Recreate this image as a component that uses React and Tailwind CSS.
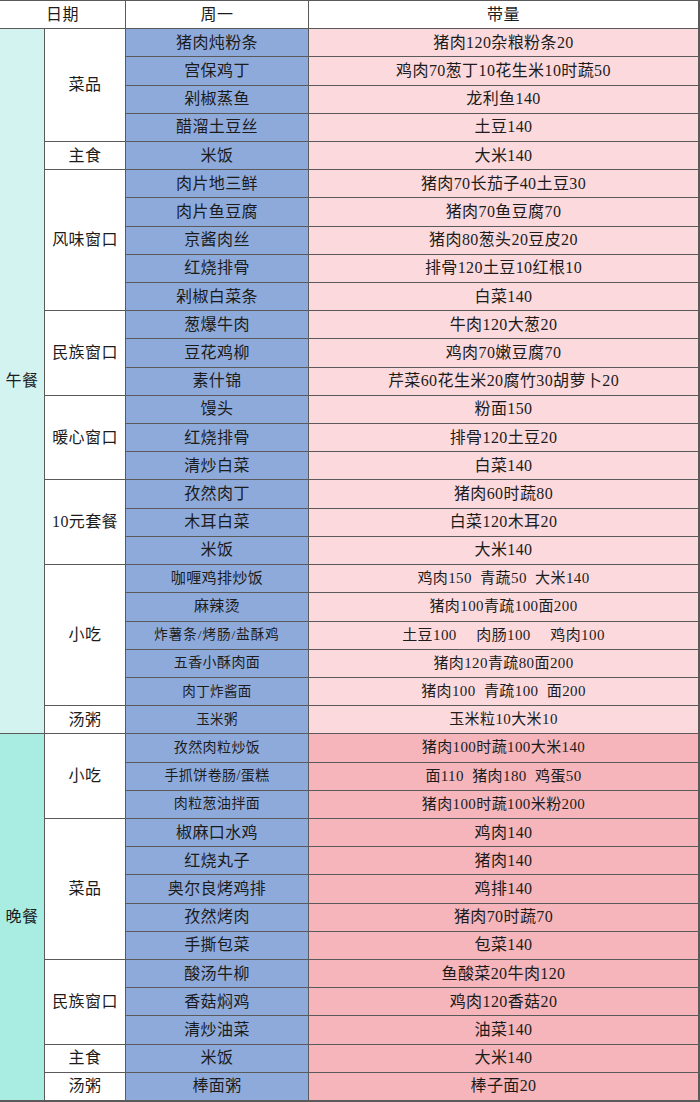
import React from "react";

const lunch = [
  { g: "菜品", items: [
    ["猪肉炖粉条", "猪肉120杂粮粉条20"],
    ["宫保鸡丁", "鸡肉70葱丁10花生米10时蔬50"],
    ["剁椒蒸鱼", "龙利鱼140"],
    ["醋溜土豆丝", "土豆140"],
  ]},
  { g: "主食", items: [["米饭", "大米140"]] },
  { g: "风味窗口", items: [
    ["肉片地三鲜", "猪肉70长茄子40土豆30"],
    ["肉片鱼豆腐", "猪肉70鱼豆腐70"],
    ["京酱肉丝", "猪肉80葱头20豆皮20"],
    ["红烧排骨", "排骨120土豆10红根10"],
    ["剁椒白菜条", "白菜140"],
  ]},
  { g: "民族窗口", items: [
    ["葱爆牛肉", "牛肉120大葱20"],
    ["豆花鸡柳", "鸡肉70嫩豆腐70"],
    ["素什锦", "芹菜60花生米20腐竹30胡萝卜20"],
  ]},
  { g: "暖心窗口", items: [
    ["馒头", "粉面150"],
    ["红烧排骨", "排骨120土豆20"],
    ["清炒白菜", "白菜140"],
  ]},
  { g: "10元套餐", items: [
    ["孜然肉丁", "猪肉60时蔬80"],
    ["木耳白菜", "白菜120木耳20"],
    ["米饭", "大米140"],
  ]},
  { g: "小吃", items: [
    ["咖喱鸡排炒饭", "鸡肉150  青蔬50  大米140", "text-[15px]", "text-[15px]"],
    ["麻辣烫", "猪肉100青疏100面200", "text-[15px]", "text-[15px]"],
    ["炸薯条/烤肠/盐酥鸡", "土豆100　 肉肠100　 鸡肉100", "text-[13.5px] tracking-[1px]", "text-[15px]"],
    ["五香小酥肉面", "猪肉120青疏80面200", "text-[14px]", "text-[15px]"],
    ["肉丁炸酱面", "猪肉100  青疏100  面200", "text-[13.5px]", "text-[15px]"],
  ]},
  { g: "汤粥", items: [["玉米粥", "玉米粒10大米10", "text-[13.5px]", "text-[15px]"]] },
];

const dinner = [
  { g: "小吃", items: [
    ["孜然肉粒炒饭", "猪肉100时蔬100大米140", "text-[14px]", "text-[15px]"],
    ["手抓饼卷肠/蛋糕", "面110  猪肉180  鸡蛋50", "text-[14px]", "text-[15px]"],
    ["肉粒葱油拌面", "猪肉100时蔬100米粉200", "text-[14px]", "text-[15px]"],
  ]},
  { g: "菜品", items: [
    ["椒麻口水鸡", "鸡肉140"],
    ["红烧丸子", "猪肉140"],
    ["奥尔良烤鸡排", "鸡排140"],
    ["孜然烤肉", "猪肉70时蔬70"],
    ["手撕包菜", "包菜140"],
  ]},
  { g: "民族窗口", items: [
    ["酸汤牛柳", "鱼酸菜20牛肉120"],
    ["香菇焖鸡", "鸡肉120香菇20"],
    ["清炒油菜", "油菜140"],
  ]},
  { g: "主食", items: [["米饭", "大米140"]] },
  { g: "汤粥", items: [["棒面粥", "棒子面20"]] },
];

const span = {
  1: "row-span-1",
  3: "row-span-3",
  4: "row-span-4",
  5: "row-span-5",
};

const cell = "flex items-center justify-center whitespace-pre";

function Meal({ name, groups, mealBg, pinkBg, total }) {
  const out = [];
  groups.forEach((grp, gi) => {
    grp.items.forEach((it, ii) => {
      if (gi === 0 && ii === 0) {
        out.push(
          <div key={name} className={`${cell} ${mealBg} ${total === 25 ? "row-span-[25]" : "row-span-[13]"}`}>
            {name}
          </div>
        );
      }
      if (ii === 0) {
        out.push(
          <div key={`${name}-g${gi}`} className={`${cell} bg-white ${span[grp.items.length]}`}>
            {grp.g}
          </div>
        );
      }
      out.push(
        <div key={`${name}-d${gi}-${ii}`} className={`${cell} bg-[#8eaadb] ${it[2] || ""}`}>
          {it[0]}
        </div>
      );
      out.push(
        <div key={`${name}-a${gi}-${ii}`} className={`${cell} ${pinkBg} ${it[3] || ""}`}>
          {it[1]}
        </div>
      );
    });
  });
  return out;
}

export default function App() {
  return (
    <div
      className="w-[700px] h-[1102px] bg-[#5a5a5a] pt-px pr-[2px] pb-[2px] grid grid-cols-[44px_80px_182px_1fr] grid-rows-[repeat(39,minmax(0,1fr))] gap-px text-[16px] tracking-[0.4px] text-[#1c1c1c] leading-none"
      style={{ fontFamily: '"Liberation Serif", "Noto Sans CJK SC", serif' }}
    >
      <div className={`${cell} bg-white col-span-2`}>日期</div>
      <div className={`${cell} bg-white`}>周一</div>
      <div className={`${cell} bg-white`}>带量</div>
      <Meal name="午餐" groups={lunch} mealBg="bg-[#d3f3f0]" pinkBg="bg-[#fbd9dd]" total={25} />
      <Meal name="晚餐" groups={dinner} mealBg="bg-[#a8ece2]" pinkBg="bg-[#f5b5ba]" total={13} />
    </div>
  );
}
